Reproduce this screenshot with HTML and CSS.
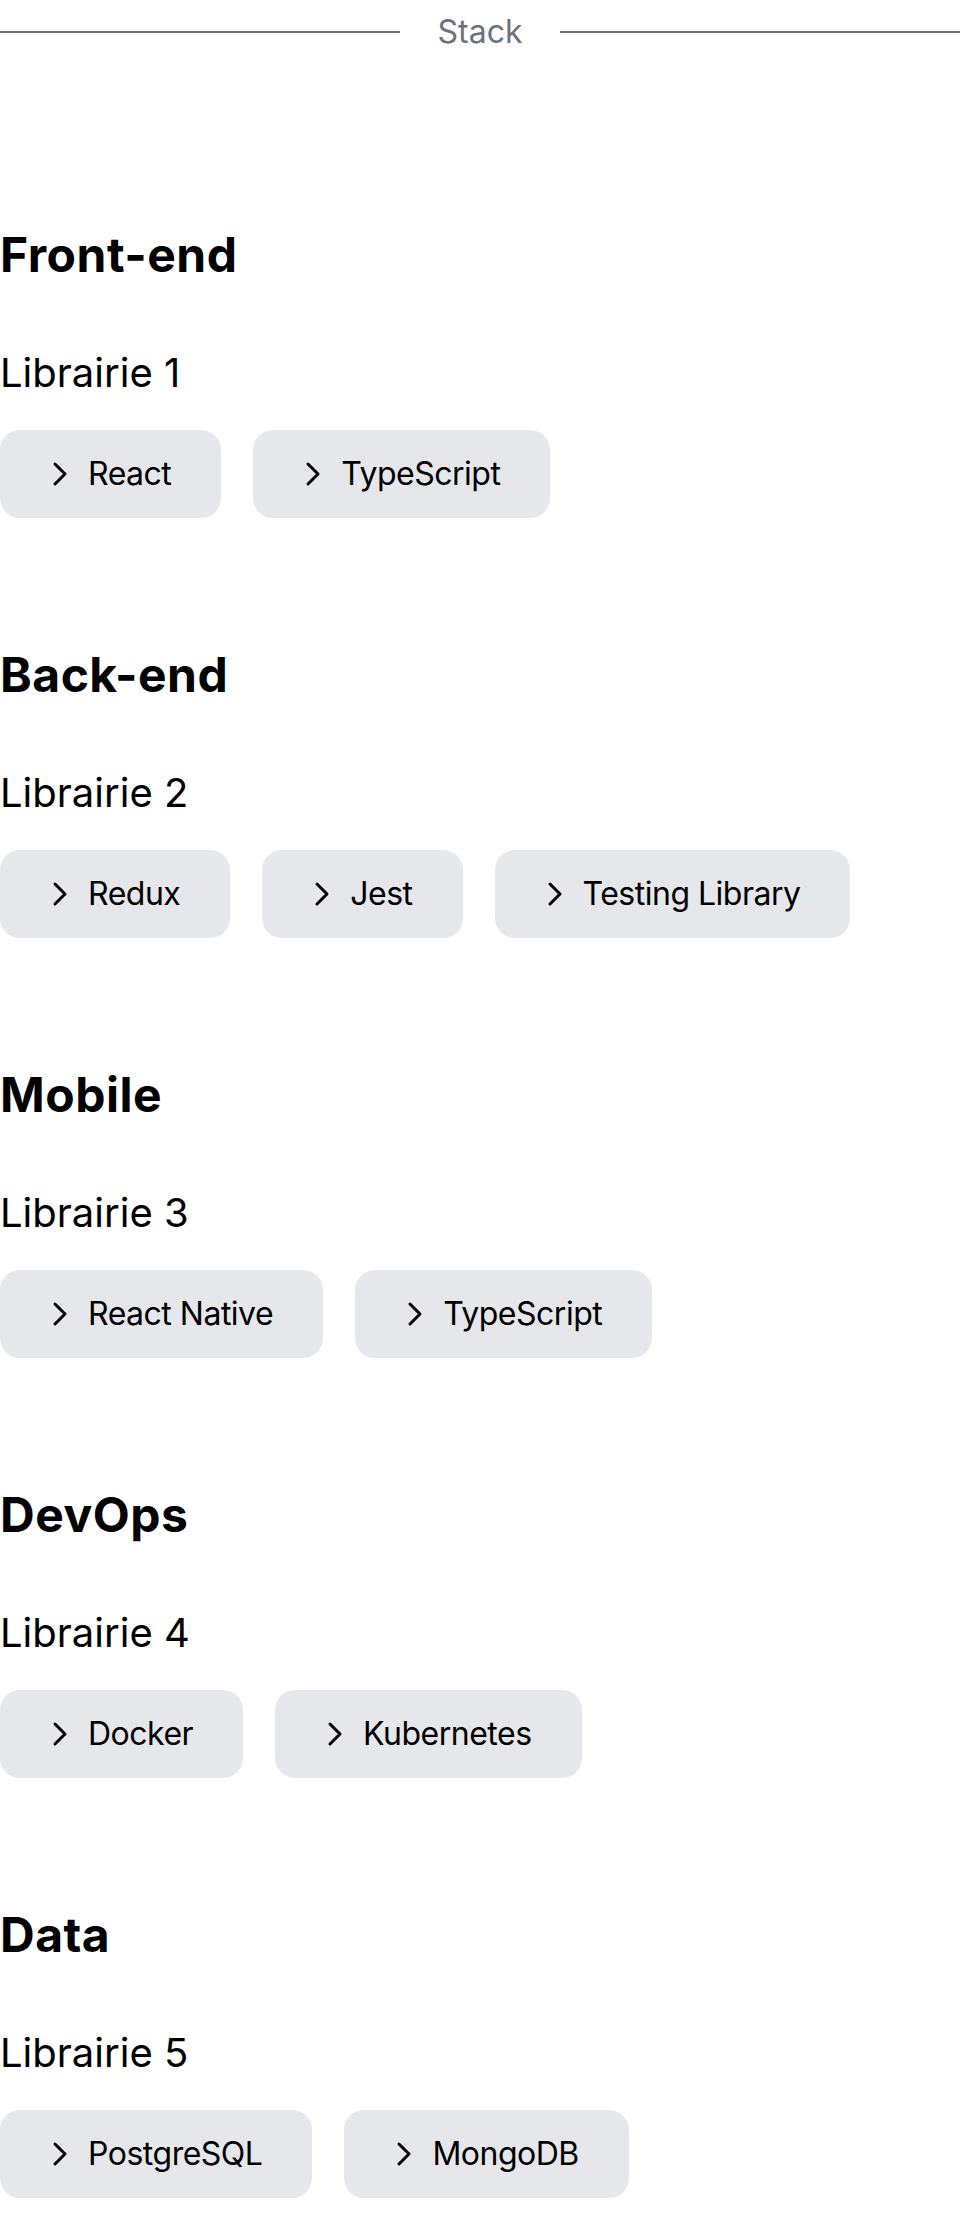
FILE: index.html
```html
<!DOCTYPE html>
<html lang="fr">
<head>
<meta charset="utf-8">
<title>Stack</title>
<link rel="stylesheet" href="styles.css">
</head>
<body>
<main class="stack">
  <div class="divider">
    <span class="divider-line"></span>
    <span class="divider-label">Stack</span>
    <span class="divider-line"></span>
  </div>

  <section class="group">
    <h2 class="group-title">Front-end</h2>
    <p class="group-sub">Librairie 1</p>
    <div class="chips">
      <span class="chip"><svg class="chev" viewBox="0 0 24 24"><path d="m9 18 6-6-6-6"/></svg><span>React</span></span>
      <span class="chip"><svg class="chev" viewBox="0 0 24 24"><path d="m9 18 6-6-6-6"/></svg><span>TypeScript</span></span>
    </div>
  </section>

  <section class="group">
    <h2 class="group-title">Back-end</h2>
    <p class="group-sub">Librairie 2</p>
    <div class="chips">
      <span class="chip"><svg class="chev" viewBox="0 0 24 24"><path d="m9 18 6-6-6-6"/></svg><span>Redux</span></span>
      <span class="chip"><svg class="chev" viewBox="0 0 24 24"><path d="m9 18 6-6-6-6"/></svg><span>Jest</span></span>
      <span class="chip"><svg class="chev" viewBox="0 0 24 24"><path d="m9 18 6-6-6-6"/></svg><span>Testing Library</span></span>
    </div>
  </section>

  <section class="group">
    <h2 class="group-title">Mobile</h2>
    <p class="group-sub">Librairie 3</p>
    <div class="chips">
      <span class="chip"><svg class="chev" viewBox="0 0 24 24"><path d="m9 18 6-6-6-6"/></svg><span>React Native</span></span>
      <span class="chip"><svg class="chev" viewBox="0 0 24 24"><path d="m9 18 6-6-6-6"/></svg><span>TypeScript</span></span>
    </div>
  </section>

  <section class="group">
    <h2 class="group-title">DevOps</h2>
    <p class="group-sub">Librairie 4</p>
    <div class="chips">
      <span class="chip"><svg class="chev" viewBox="0 0 24 24"><path d="m9 18 6-6-6-6"/></svg><span>Docker</span></span>
      <span class="chip"><svg class="chev" viewBox="0 0 24 24"><path d="m9 18 6-6-6-6"/></svg><span>Kubernetes</span></span>
    </div>
  </section>

  <section class="group">
    <h2 class="group-title">Data</h2>
    <p class="group-sub">Librairie 5</p>
    <div class="chips">
      <span class="chip"><svg class="chev" viewBox="0 0 24 24"><path d="m9 18 6-6-6-6"/></svg><span>PostgreSQL</span></span>
      <span class="chip"><svg class="chev" viewBox="0 0 24 24"><path d="m9 18 6-6-6-6"/></svg><span>MongoDB</span></span>
    </div>
  </section>
</main>
</body>
</html>
```

FILE: styles.css
```css
html, body {
  margin: 0;
  padding: 0;
  background: #ffffff;
}

body {
  font-family: Inter, "Noto Sans", "Liberation Sans", sans-serif;
  color: #000000;
}

.stack {
  display: flex;
  flex-direction: column;
  padding-top: 8px;
}

.divider {
  display: flex;
  align-items: center;
  height: 48px;
  margin-bottom: 42px;
}

.divider-line {
  flex: 1;
  height: 2px;
  background: #6b7280;
}

.divider-label {
  padding: 0 38px;
  font-size: 32px;
  line-height: 48px;
  color: #6b7280;
}

.group {
  display: flex;
  flex-direction: column;
  padding-top: 133px;
}

.group-title {
  margin: 0;
  font-size: 48px;
  line-height: 48px;
  font-weight: 700;
  letter-spacing: 0.5px;
}

.group-sub {
  margin: 64px 0 0;
  font-size: 40px;
  line-height: 60px;
  font-weight: 400;
}

.chips {
  display: flex;
  flex-wrap: wrap;
  gap: 32px;
  margin-top: 27px;
}

.chip {
  display: inline-flex;
  align-items: center;
  gap: 8px;
  padding: 20px 50px 20px 40px;
  background: #e5e7eb;
  border-radius: 20px;
  font-size: 32px;
  line-height: 48px;
  letter-spacing: -0.5px;
  color: #000000;
}

.chev {
  width: 40px;
  height: 40px;
  fill: none;
  stroke: #000000;
  stroke-width: 1.8;
  stroke-linecap: round;
  stroke-linejoin: round;
}
```
